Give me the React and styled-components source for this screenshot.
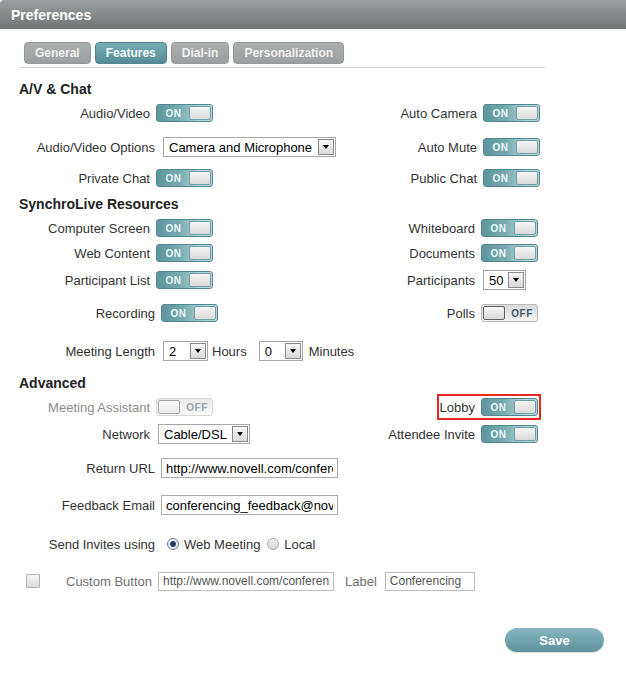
import React from "react";
import styled, { createGlobalStyle, css } from "styled-components";

const GlobalStyle = createGlobalStyle`
  html, body { margin: 0; padding: 0; background: #fff; }
  body { font-family: "Liberation Sans", Arial, sans-serif; color: #333; }
  * { box-sizing: border-box; }
`;

const FONT = `"Liberation Sans", Arial, sans-serif`;

const Page = styled.div`
  width: 626px;
  height: 674px;
  background: #fff;
  overflow: hidden;
`;

const Header = styled.div`
  height: 29px;
  background: linear-gradient(#9b9f9f, #717575);
  color: #fff;
  font-weight: bold;
  font-size: 14px;
  padding-left: 11px;
  display: flex;
  align-items: center;
  border-top-left-radius: 4px;
`;

const TabBar = styled.div`
  display: flex;
  gap: 4px;
  margin: 13px 0 0 24px;
`;

const Tab = styled.div`
  height: 22px;
  padding: 0 10px;
  display: flex;
  align-items: center;
  font-size: 12px;
  font-weight: bold;
  color: ${(p) => (p.$active ? "#f4fbfc" : "#f1f1f1")};
  border: 1px solid ${(p) => (p.$active ? "#4f8892" : "#939797")};
  border-radius: 4px;
  background: ${(p) =>
    p.$active
      ? "linear-gradient(#78adb6, #538c97)"
      : "linear-gradient(#acafaf, #9b9f9f)"};
`;

const TabRule = styled.div`
  margin: 3px 0 0 19px;
  width: 526px;
  height: 1px;
  background: #d2d2d2;
`;

const Heading = styled.div`
  margin: ${(p) => p.$mt}px 0 0 19px;
  height: 20px;
  line-height: 20px;
  font-size: 14px;
  font-weight: bold;
  color: #222;
`;

const Row = styled.div`
  display: grid;
  grid-template-columns: 340px 200px;
  height: 24px;
  align-items: center;
  margin-top: ${(p) => p.$mt}px;
`;

const Field = styled.div`
  display: flex;
  align-items: center;
  height: 20px;
  white-space: nowrap;
  ${(p) => p.$span && css`grid-column: 1 / -1;`}
  ${(p) =>
    p.$hl &&
    css`
      justify-self: end;
      margin-right: 1px;
      height: 22px;
      padding: 0 1px;
      outline: 2px solid #e6291e;
    `}
`;

const Label = styled.span`
  ${(p) =>
    p.$w &&
    css`
      width: ${p.$w}px;
      text-align: right;
      flex-shrink: 0;
    `}
  margin-right: ${(p) => (p.$gap ?? 6)}px;
  font-size: 13px;
  color: ${(p) => (p.$muted ? "#8c8c8c" : "#333")};
  white-space: nowrap;
`;

const Unit = styled.span`
  font-size: 13px;
  color: #333;
  margin: 0 ${(p) => p.$mr}px 0 ${(p) => p.$ml}px;
`;

const ToggleBox = styled.div`
  width: 57px;
  height: 18px;
  border-radius: 3px;
  padding: 1px;
  display: flex;
  align-items: center;
  flex-direction: ${(p) => (p.$on ? "row" : "row-reverse")};
  border: 1px solid ${(p) => (p.$on ? "#52888f" : "#b9b9b9")};
  background: ${(p) =>
    p.$on
      ? "linear-gradient(90deg, #5e969d 0%, #75aab0 40%, #b6d6d9 78%)"
      : "linear-gradient(#d9d9d9, #f3f3f3)"};
  opacity: ${(p) => (p.$disabled ? 0.55 : 1)};
  flex-shrink: 0;
`;

const ToggleText = styled.span`
  flex: 1;
  text-align: center;
  font-family: ${FONT};
  font-size: 10px;
  font-weight: bold;
  letter-spacing: 0.5px;
  color: ${(p) => (p.$on ? "#eef8f9" : "#46556a")};
  padding-left: ${(p) => (p.$on ? 0 : 3)}px;
`;

const Knob = styled.span`
  width: 22px;
  height: 14px;
  border-radius: 2px;
  background: linear-gradient(#f5f5f5, #dadada);
  border: 1px solid ${(p) => (p.$on ? "#6f9ea4" : "#5f5f5f")};
`;

const Toggle = ({ on = true, disabled }) => (
  <ToggleBox $on={on} $disabled={disabled}>
    <ToggleText $on={on}>{on ? "ON" : "OFF"}</ToggleText>
    <Knob $on={on} />
  </ToggleBox>
);

const SelectBox = styled.div`
  width: ${(p) => p.$w}px;
  height: 20px;
  border: 1px solid #a8a8a8;
  background: #fff;
  display: flex;
  align-items: center;
  justify-content: space-between;
  padding: 0 1px 0 5px;
  font-size: 13px;
  color: #000;
  flex-shrink: 0;
`;

const Arrow = styled.span`
  width: 16px;
  height: 16px;
  border: 1px solid #8a8a8a;
  background: linear-gradient(#f8f8f8, #d9d9d9);
  display: flex;
  align-items: center;
  justify-content: center;
  &::after {
    content: "";
    border-left: 3.5px solid transparent;
    border-right: 3.5px solid transparent;
    border-top: 4px solid #000;
  }
`;

const Select = ({ w, children }) => (
  <SelectBox $w={w}>
    <span>{children}</span>
    <Arrow />
  </SelectBox>
);

const TextInput = styled.input`
  width: ${(p) => p.$w}px;
  height: ${(p) => (p.$small ? 19 : 20)}px;
  border: 1px solid ${(p) => (p.$small ? "#bdbdbd" : "#ababab")};
  padding: 0 4px;
  font-family: ${FONT};
  font-size: ${(p) => (p.$small ? 12 : 13)}px;
  color: ${(p) => (p.$small ? "#555" : "#000")};
  background: #fff;
  outline: none;
  border-radius: 0;
`;

const RadioDot = styled.span`
  width: 12px;
  height: 12px;
  border-radius: 50%;
  border: 1px solid ${(p) => (p.$checked ? "#6d7a88" : "#a9a9a9")};
  background: ${(p) =>
    p.$checked
      ? "radial-gradient(circle, #1d3557 0, #2a4a70 2.6px, #e6ebf0 3.4px)"
      : "linear-gradient(#f3f3f3, #d8d8d8)"};
  margin-right: 5px;
  flex-shrink: 0;
`;

const RadioText = styled.span`
  font-size: 13px;
  color: #333;
  margin-right: ${(p) => p.$mr || 0}px;
`;

const CustomRow = styled.div`
  display: flex;
  align-items: center;
  height: 24px;
  margin-top: 13px;
  padding-left: 26px;
`;

const CheckBox = styled.span`
  width: 14px;
  height: 14px;
  border: 1px solid #b3b3b3;
  background: linear-gradient(#f6f6f6, #dcdcdc);
  border-radius: 1px;
  margin-right: 26px;
`;

const MutedLabel = styled.span`
  font-size: 13px;
  color: #707070;
  margin: 0 ${(p) => p.$mr}px 0 ${(p) => p.$ml || 0}px;
`;

const SaveRow = styled.div`
  display: flex;
  justify-content: flex-end;
  padding-right: 22px;
  margin-top: 35px;
`;

const SaveButton = styled.button`
  width: 99px;
  height: 24px;
  border-radius: 12px;
  border: none;
  background: linear-gradient(#88b7c0, #5c919b);
  box-shadow: 0 1px 1px rgba(0, 0, 0, 0.15);
  color: #fff;
  font-family: ${FONT};
  font-size: 13px;
  font-weight: bold;
  cursor: pointer;
`;

export default function App() {
  return (
    <Page>
      <GlobalStyle />
      <Header>Preferences</Header>
      <TabBar>
        <Tab>General</Tab>
        <Tab $active>Features</Tab>
        <Tab>Dial-in</Tab>
        <Tab>Personalization</Tab>
      </TabBar>
      <TabRule />

      <Heading $mt={11}>A/V &amp; Chat</Heading>
      <Row $mt={2}>
        <Field>
          <Label $w={150}>Audio/Video</Label>
          <Toggle />
        </Field>
        <Field>
          <Label $w={137}>Auto Camera</Label>
          <Toggle />
        </Field>
      </Row>
      <Row $mt={10}>
        <Field>
          <Label $w={155} $gap={8}>Audio/Video Options</Label>
          <Select w={173}>Camera and Microphone</Select>
        </Field>
        <Field>
          <Label $w={137}>Auto Mute</Label>
          <Toggle />
        </Field>
      </Row>
      <Row $mt={7}>
        <Field>
          <Label $w={150}>Private Chat</Label>
          <Toggle />
        </Field>
        <Field>
          <Label $w={137}>Public Chat</Label>
          <Toggle />
        </Field>
      </Row>

      <Heading $mt={4}>SynchroLive Resources</Heading>
      <Row $mt={2}>
        <Field>
          <Label $w={150}>Computer Screen</Label>
          <Toggle />
        </Field>
        <Field>
          <Label $w={135}>Whiteboard</Label>
          <Toggle />
        </Field>
      </Row>
      <Row $mt={1}>
        <Field>
          <Label $w={150}>Web Content</Label>
          <Toggle />
        </Field>
        <Field>
          <Label $w={135}>Documents</Label>
          <Toggle />
        </Field>
      </Row>
      <Row $mt={3}>
        <Field>
          <Label $w={150}>Participant List</Label>
          <Toggle />
        </Field>
        <Field>
          <Label $w={135} $gap={8}>Participants</Label>
          <Select w={43}>50</Select>
        </Field>
      </Row>
      <Row $mt={9}>
        <Field>
          <Label $w={155}>Recording</Label>
          <Toggle />
        </Field>
        <Field>
          <Label $w={135}>Polls</Label>
          <Toggle on={false} />
        </Field>
      </Row>
      <Row $mt={14}>
        <Field $span>
          <Label $w={155} $gap={8}>Meeting Length</Label>
          <Select w={45}>2</Select>
          <Unit $ml={4} $mr={12}>Hours</Unit>
          <Select w={44}>0</Select>
          <Unit $ml={6} $mr={0}>Minutes</Unit>
        </Field>
      </Row>

      <Heading $mt={10}>Advanced</Heading>
      <Row $mt={2}>
        <Field>
          <Label $w={150} $muted>Meeting Assistant</Label>
          <Toggle on={false} disabled />
        </Field>
        <Field $hl>
          <Label>Lobby</Label>
          <Toggle />
        </Field>
      </Row>
      <Row $mt={3}>
        <Field>
          <Label $w={150} $gap={8}>Network</Label>
          <Select w={92}>Cable/DSL</Select>
        </Field>
        <Field>
          <Label $w={135}>Attendee Invite</Label>
          <Toggle />
        </Field>
      </Row>
      <Row $mt={10}>
        <Field $span>
          <Label $w={155}>Return URL</Label>
          <TextInput $w={177} readOnly value="http://www.novell.com/conferencing" />
        </Field>
      </Row>
      <Row $mt={13}>
        <Field $span>
          <Label $w={155}>Feedback Email</Label>
          <TextInput $w={177} readOnly value="conferencing_feedback@novell.com" />
        </Field>
      </Row>
      <Row $mt={15}>
        <Field $span>
          <Label $w={155} $gap={12}>Send Invites using</Label>
          <RadioDot $checked />
          <RadioText $mr={7}>Web Meeting</RadioText>
          <RadioDot />
          <RadioText>Local</RadioText>
        </Field>
      </Row>

      <CustomRow>
        <CheckBox />
        <MutedLabel $mr={6}>Custom Button</MutedLabel>
        <TextInput $small $w={176} readOnly value="http://www.novell.com/conferencing" />
        <MutedLabel $ml={11} $mr={8}>Label</MutedLabel>
        <TextInput $small $w={90} readOnly value="Conferencing" />
      </CustomRow>

      <SaveRow>
        <SaveButton>Save</SaveButton>
      </SaveRow>
    </Page>
  );
}
